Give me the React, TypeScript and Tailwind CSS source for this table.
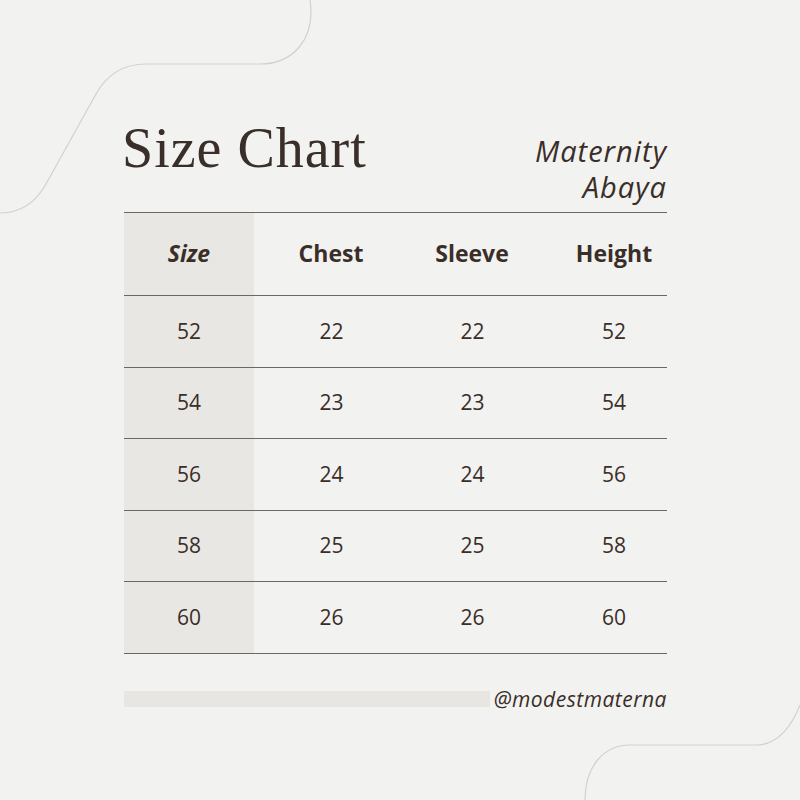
const ROWS = [
  ["52", "22", "22", "52"],
  ["54", "23", "23", "54"],
  ["56", "24", "24", "56"],
  ["58", "25", "25", "58"],
  ["60", "26", "26", "60"],
];

const cols = "grid grid-cols-[130px_154px_128px_131px]";

export default function App() {
  return (
    <div className="relative w-[800px] h-[800px] overflow-hidden bg-[#f2f2f1] text-[#3a2e28] font-['Open_Sans',sans-serif]">
      {/* decorative curves */}
      <svg className="absolute inset-0 pointer-events-none" width="800" height="800" viewBox="0 0 800 800" fill="none">
        <path
          d="M310 0 C316 40 292 64 260 64 L146 64 C122 64 106 76 96 94 L46 184 C36 202 22 213 0 213"
          stroke="#d6d0cb"
          strokeWidth="1.2"
        />
        <path
          d="M800 705 C790 730 776 745 756 745 L630 745 C604 745 585 766 585 800"
          stroke="#d6d0cb"
          strokeWidth="1.2"
        />
      </svg>

      <div className="relative ml-[124px] w-[543px] pt-[120px]">
        {/* title */}
        <div className="flex justify-between items-start h-[92px]">
          <h1 className="-ml-[2px] text-[56px] leading-none tracking-[1px] font-['Liberation_Serif',serif] font-normal">
            Size Chart
          </h1>
          <div className="mt-[13px] text-right italic font-normal text-[29px] leading-[36px] tracking-[1px]">
            <div>Maternity</div>
            <div>Abaya</div>
          </div>
        </div>

        {/* table */}
        <div className="border-t border-[#6f6660]">
          <div className={`${cols} h-[83px] border-b border-[#6f6660] text-[23px] font-bold`}>
            <div className="flex items-center justify-center bg-[#e9e7e3] italic pb-[2px]">Size</div>
            <div className="flex items-center justify-center pb-[2px]">Chest</div>
            <div className="flex items-center justify-center pb-[2px]">Sleeve</div>
            <div className="flex items-center justify-center pl-[25px] pb-[2px]">Height</div>
          </div>
          {ROWS.map((r, i) => (
            <div key={i} className={`${cols} h-[71.5px] border-b border-[#6f6660] text-[21px]`}>
              <div className="flex items-center justify-center bg-[#e9e7e3]">{r[0]}</div>
              <div className="flex items-center justify-center pl-[1px]">{r[1]}</div>
              <div className="flex items-center justify-center pl-[1px]">{r[2]}</div>
              <div className="flex items-center justify-center pl-[25px]">{r[3]}</div>
            </div>
          ))}
        </div>

        {/* footer */}
        <div className="mt-[33px] flex items-center">
          <div className="h-[16px] flex-1 bg-[#e8e6e2]" />
          <div className="ml-[4px] italic text-[21px] leading-[24px] tracking-[0.5px]">@modestmaterna</div>
        </div>
      </div>
    </div>
  );
}
